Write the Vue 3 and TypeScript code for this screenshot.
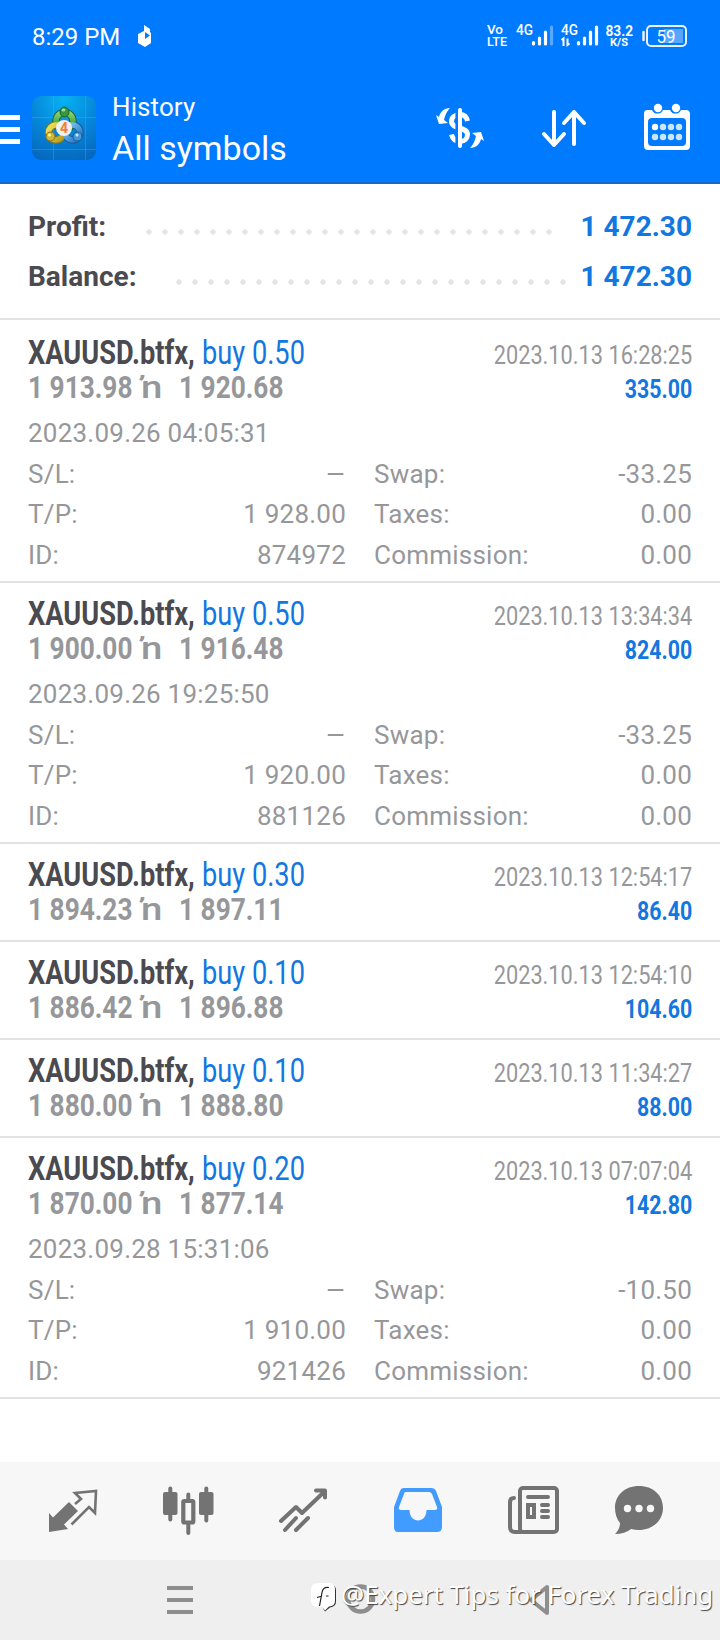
<script setup lang="ts">
interface Trade {
  volume: string
  open: string
  close: string
  closedAt: string
  profit: string
  openedAt?: string
  takeProfit?: string
  id?: string
  swap?: string
}

const summary = [
  { label: 'Profit:', value: '1 472.30', kind: 'profit' },
  { label: 'Balance:', value: '1 472.30', kind: 'balance' },
]

const trades: Trade[] = [
  { volume: 'buy 0.50', open: '1 913.98', close: '1 920.68', closedAt: '2023.10.13 16:28:25', profit: '335.00', openedAt: '2023.09.26 04:05:31', takeProfit: '1 928.00', id: '874972', swap: '-33.25' },
  { volume: 'buy 0.50', open: '1 900.00', close: '1 916.48', closedAt: '2023.10.13 13:34:34', profit: '824.00', openedAt: '2023.09.26 19:25:50', takeProfit: '1 920.00', id: '881126', swap: '-33.25' },
  { volume: 'buy 0.30', open: '1 894.23', close: '1 897.11', closedAt: '2023.10.13 12:54:17', profit: '86.40' },
  { volume: 'buy 0.10', open: '1 886.42', close: '1 896.88', closedAt: '2023.10.13 12:54:10', profit: '104.60' },
  { volume: 'buy 0.10', open: '1 880.00', close: '1 888.80', closedAt: '2023.10.13 11:34:27', profit: '88.00' },
  { volume: 'buy 0.20', open: '1 870.00', close: '1 877.14', closedAt: '2023.10.13 07:07:04', profit: '142.80', openedAt: '2023.09.28 15:31:06', takeProfit: '1 910.00', id: '921426', swap: '-10.50' },
]
</script>

<template>
  <div class="screen">
    <header class="top">
      <div class="status">
        <span class="clock">8:29 PM</span>
        <svg class="note" width="14" height="22" viewBox="0 0 14 22"><path fill="#fff" d="M6 0l6 4v4l1-1v11l-6 4-7-4V9l6-3z" /><path fill="#007aff" d="M7 7v7l5-3.500z" /></svg>
        <span class="grow"></span>
        <svg class="cells" width="202" height="26" viewBox="0 0 202 26">
          <g fill="#fff" font-family="Roboto" font-weight="500">
            <text x="0" y="11" font-size="13.5" textLength="16" lengthAdjust="spacingAndGlyphs">Vo</text>
            <text x="0" y="23" font-size="13.5" textLength="20" lengthAdjust="spacingAndGlyphs">LTE</text>
            <text x="29" y="12" font-size="14.5" textLength="17" lengthAdjust="spacingAndGlyphs">4G</text>
            <text x="74" y="12" font-size="14.5" textLength="17" lengthAdjust="spacingAndGlyphs">4G</text>
            <text x="118.500" y="13" font-size="15.5" font-weight="700" textLength="27.500" lengthAdjust="spacingAndGlyphs">83.2</text>
            <text x="123" y="23" font-size="11.5" font-weight="700" textLength="18" lengthAdjust="spacingAndGlyphs">K/S</text>
          </g>
          <g stroke="#fff" stroke-width="3.200" stroke-linecap="round">
            <path d="M46.500 21v-1.500M52.500 21v-6M58.500 21V9" />
            <path d="M64.500 21V4" opacity=".35" />
            <path d="M91.500 21v-1.500M97.500 21v-6M103.500 21V9M109.500 21V4" />
          </g>
          <path d="M74.500 17l2-1.500V23M80.500 15.500v6.500l2-1.500" fill="none" stroke="#fff" stroke-width="2" />
          <rect x="160" y="3" width="39" height="20" rx="4" fill="none" stroke="#e8f3ff" stroke-width="2" />
          <rect x="177" y="6" width="19" height="14" fill="#58a6ff" />
          <path d="M156.500 9v8" stroke="#e8f3ff" stroke-width="2.500" stroke-linecap="round" />
          <text x="169.500" y="19.500" font-family="Roboto" font-size="18" fill="#fff" textLength="19" lengthAdjust="spacingAndGlyphs">59</text>
        </svg>
      </div>
      <div class="bar">
        <svg class="burger" width="20" height="26" viewBox="0 0 20 26"><path fill="#fff" d="M0 0h20v5H0zM0 12h20v5H0zM0 24h20v5H0z" /></svg>
        <svg class="logo" width="64" height="64" viewBox="0 0 64 64">
          <defs>
            <radialGradient id="tile" cx=".5" cy=".05" r="1"><stop offset="0" stop-color="#08b2f3" /><stop offset=".55" stop-color="#0684d8" /><stop offset="1" stop-color="#0568bd" /></radialGradient>
            <linearGradient id="green" x2="0" y2="1"><stop stop-color="#8bd46d" /><stop offset="1" stop-color="#1f8a27" /></linearGradient>
            <linearGradient id="gold" x2="1" y2="1"><stop stop-color="#f0e45a" /><stop offset="1" stop-color="#b79a1b" /></linearGradient>
            <linearGradient id="sky" x2="1" y2="1"><stop stop-color="#8ccff5" /><stop offset="1" stop-color="#1a6fc0" /></linearGradient>
          </defs>
          <rect width="64" height="64" rx="9" fill="url(#tile)" />
          <path d="M0 21.500h64M0 53.500h64M21.500 0v64M53.500 0v64" stroke="#55bdf0" stroke-opacity=".3" />
          <g fill="none" stroke-width="5.500">
            <circle cx="32.500" cy="25" r="8.500" stroke="#205f3c" stroke-width="7.500" />
            <circle cx="24" cy="36.500" r="7.500" stroke="#7c7a24" stroke-width="7.500" />
            <circle cx="40.500" cy="36.500" r="7.500" stroke="#195c9c" stroke-width="7.500" />
            <circle cx="32.500" cy="25" r="8.500" stroke="url(#green)" />
            <circle cx="24" cy="36.500" r="7.500" stroke="url(#gold)" />
            <circle cx="40.500" cy="36.500" r="7.500" stroke="url(#sky)" />
          </g>
          <ellipse cx="32.500" cy="16" rx="4.500" ry="5" fill="#36973b" stroke="#1b6130" />
          <circle cx="18.500" cy="40.500" r="4.500" fill="#d2b62f" stroke="#847421" />
          <circle cx="45.500" cy="40.500" r="4.500" fill="#4597d7" stroke="#175ca0" />
          <ellipse cx="31.500" cy="14" rx="2" ry="1.500" fill="#a4dc9c" /><circle cx="17.500" cy="39" r="1.500" fill="#fff3a0" /><circle cx="45" cy="39" r="1.500" fill="#c6e9ff" />
          <circle cx="32" cy="32" r="8" fill="#f1f1ec" />
          <text x="32" y="37" text-anchor="middle" font-family="Roboto" font-weight="700" font-size="14" fill="#f27b38">4</text>
        </svg>
        <div class="heading">
          <span class="small">History</span>
          <span class="large">All symbols</span>
        </div>
        <svg class="actions" width="256" height="50" viewBox="0 0 256 50">
          <g fill="none" stroke="#fff">
            <path d="M32.500 17C31.500 12.500 28.500 10.500 25 10.500c-5 0-8.500 3-8.500 7 0 8 16 5 16 13 0 4-3 7-7.500 7-5 0-7.500-3-8.500-7" stroke-width="5" />
            <path d="M21.700 6v37" stroke="#007aff" stroke-width="2.600" /><path d="M25 6v36" stroke-width="4" stroke-linecap="round" />
            <g stroke-width="4" stroke-linecap="round" stroke-linejoin="round"><path d="M119 8v33M109 30l10 11 10-11M139 40V8M129 19l10-11 10 11" /></g>
          </g>
          <path fill="#fff" d="M15 4C9 4 5 8 4 13l-3-2 3 9 9-1-4-3c1-5 3-9 6-12zM35 44c6 0 10-4 11-9l3 2-3-9-9 1 4 3c-1 5-3 9-6 12z" />
          <path fill="#fff" d="M212 6h5a6 6 0 0 0 11 0h7a6 6 0 0 0 11 0h5q4 0 4 4v32q0 4-4 4h-38q-4 0-4-4V10q0-4 3-4z" />
          <circle cx="223" cy="4" r="4.200" fill="#fff" /><circle cx="241" cy="4" r="4.200" fill="#fff" />
          <rect x="213" y="14" width="38" height="28" rx="4" fill="#007aff" />
          <g fill="#c9e6ff"><circle cx="220" cy="23" r="3.200" fill="#fff" /><circle cx="228" cy="23" r="3.200" /><circle cx="236" cy="23" r="3.200" /><circle cx="244" cy="23" r="3.200" /><circle cx="220" cy="33" r="3.200" /><circle cx="228" cy="33" r="3.200" /><circle cx="236" cy="33" r="3.200" /><circle cx="244" cy="33" r="3.200" /></g>
        </svg>
      </div>
    </header>

    <section class="summary">
      <div v-for="s in summary" :key="s.label" class="sum-row" :class="s.kind">
        <span class="sum-label">{{ s.label }}</span>
        <span class="dots"></span>
        <span class="sum-value">{{ s.value }}</span>
      </div>
    </section>

    <main>
      <article v-for="(t, i) in trades" :key="i" class="trade">
        <div class="line">
          <span class="title"><b class="symbol">XAUUSD.btfx,</b><span class="volume">{{ t.volume }}</span></span>
          <span class="closed">{{ t.closedAt }}</span>
        </div>
        <div class="line">
          <span class="prices"><span class="price">{{ t.open }}</span><span class="mark">ŉ</span><span class="price">{{ t.close }}</span></span>
          <span class="amount">{{ t.profit }}</span>
        </div>
        <div v-if="t.openedAt" class="details">
          <div class="opened">{{ t.openedAt }}</div>
          <div class="grid">
            <div class="pair"><span>S/L:</span><span class="dash">–</span></div>
            <div class="pair"><span>Swap:</span><span>{{ t.swap }}</span></div>
            <div class="pair"><span>T/P:</span><span>{{ t.takeProfit }}</span></div>
            <div class="pair"><span>Taxes:</span><span>0.00</span></div>
            <div class="pair"><span>ID:</span><span>{{ t.id }}</span></div>
            <div class="pair"><span>Commission:</span><span>0.00</span></div>
          </div>
        </div>
      </article>
    </main>

    <footer>
      <nav class="tabs">
        <svg width="50" height="50" viewBox="0 0 50 50">
          <path fill="#737373" d="M1 46V27l4 4.500L21 16l9 9-14 13.500 4 4.500z" />
          <path fill="none" stroke="#737373" stroke-width="2.600" d="M27 18l6-5-6-6 21-2-1 22-6-6-17.500 17.500" />
        </svg>
        <svg width="52" height="50" viewBox="0 0 52 50">
          <g fill="#737373"><rect x="1" y="6" width="14.500" height="23" rx="2" /><rect x="37" y="6" width="14.500" height="23" rx="2" /></g>
          <path d="M8.300 2.500v31M44.300 2.500v32M26.300 8.500v6M26.300 38v9" stroke="#737373" stroke-width="4" stroke-linecap="round" />
          <rect x="21.300" y="15" width="10" height="21.500" rx="1" fill="none" stroke="#737373" stroke-width="4.200" />
        </svg>
        <svg width="50" height="50" viewBox="0 0 50 50">
          <path fill="none" stroke="#737373" stroke-width="4" stroke-linecap="round" stroke-linejoin="round" d="M3 35l15-14 6 6L46 6M38 4.500h9v7M7 44l11-12M18 44l12-12" />
        </svg>
        <svg width="50" height="50" viewBox="0 0 50 50">
          <path fill="#429bff" fill-rule="evenodd" d="M11 2h27q4 0 5 3l6 16v20q0 5-5 5H5q-4 0-4-5V21L7 5q1-3 4-3zm2 4q-2 0-2 2L6 21q-1 3 2 3h8.500c0 14 17 14 17 0h8.500q3 0 2-3L39 8q-1-2-3-2z" />
        </svg>
        <svg width="52" height="50" viewBox="0 0 52 50">
          <g fill="none" stroke="#737373" stroke-width="4" stroke-linecap="round"><rect x="13" y="2" width="37" height="44" rx="3" /><path d="M7 12q-4 0-4 4v25q0 5 5 5h6" /><path d="M21 11h20M35 19h6M35 25h6M35 31h6" /><rect x="21" y="19" width="6" height="12" /></g>
        </svg>
        <svg class="chat" width="50" height="50" viewBox="0 0 50 50">
          <path fill="#737373" d="M25 0c14 0 24 9 24 22S38 44 25 44q-4 0-8-1-6 5-16 5 5-5 5-11-5-6-5-15C1 9 11 0 25 0z" />
          <g fill="#f7f7f7"><circle cx="13.500" cy="22.500" r="3.700" /><circle cx="25" cy="22.500" r="3.700" /><circle cx="36.500" cy="22.500" r="3.700" /></g>
        </svg>
      </nav>
      <div class="system">
        <svg width="26" height="28" viewBox="0 0 26 28"><path fill="#8e8e8e" d="M0 0h26v4H0zM0 12h26v4H0zM0 24h26v4H0z" /></svg>
        <svg width="30" height="30" viewBox="0 0 30 30"><circle cx="13.500" cy="14" r="12.500" fill="none" stroke="#8e8e8e" stroke-width="4.500" /></svg>
        <svg width="24" height="32" viewBox="0 0 24 32"><path fill="none" stroke="#8e8e8e" stroke-width="4" stroke-linejoin="round" d="M17 3v26L1 16z" /></svg>
        <div class="credit">
          <svg width="26" height="29" viewBox="0 0 26 29"><path fill="#333" d="M8 1.500h11q6 0 6 6v11q0 5-6 6l-5 4-2-3z" /><path fill="#fff" d="M7 0h11q6 0 6 6v12q0 5-6 5.500l-4 4-3-3.500H7q-7 0-7-7V7q0-7 7-7z" /><path fill="none" stroke="#222" stroke-width="1.200" d="M18 4.500q-6-1-7 5L8.500 23M6 14.500l5-1.500M15 13h2.500" /></svg>
          <span class="handle">@Expert Tips for Forex Trading</span>
        </div>
      </div>
    </footer>
  </div>
</template>

<style>
body { margin: 0; background: #fff; }
</style>

<style scoped>
.screen { width: 720px; height: 1640px; display: flex; flex-direction: column; overflow: hidden; background: #fff; font-family: Roboto, "Liberation Sans", sans-serif; color: #96979a; }
svg { display: block; flex: none; overflow: visible; }
.top { height: 184px; box-sizing: border-box; background: #007aff; border-bottom: 2px solid #1668c8; color: #fff; }
.status { display: flex; height: 72px; align-items: center; padding: 0 31px 0 32px; box-sizing: border-box; }
.clock { font-size: 24px; line-height: 30px; padding-top: 2px; }
.note { margin-left: 18px; }
.grow { flex: 1; }
.bar { display: flex; align-items: center; height: 112px; }
.burger { margin-right: 12px; }
.heading { display: flex; flex-direction: column; margin-left: 16px; flex: 1; padding-top: 2px; }
.small { font-size: 26px; line-height: 37px; letter-spacing: .1px; }
.large { font-size: 34px; line-height: 44px; }
.actions { margin-right: 29px; margin-top: 2px; }
.summary { height: 134px; border-bottom: 2px solid #e2e2e2; }
.sum-row { display: flex; height: 50px; padding: 0 28px; align-items: center; justify-content: space-between; font-weight: 700; font-size: 28px; line-height: 50px; }
.summary .profit { padding-top: 18px; }
.sum-label { color: #4a4a50; }
.sum-value { color: #1277e0; margin-left: auto; }
.dots { height: 6px; background: radial-gradient(circle at 3px 3px, #e4e4e4 2.3px, transparent 3px) 0 0 / 16px 6px; margin-top: 9px; }
.profit .sum-label { width: 117.5px; }
.balance .sum-label { width: 147.5px; }
.profit .dots { width: 406px; }
.balance .dots { width: 390px; }
.trade { border-bottom: 2px solid #e2e2e2; padding: 14px 28px; }
.trade:first-child { padding-top: 16px; }
.line { display: flex; justify-content: space-between; align-items: baseline; height: 34px; line-height: 34px; white-space: nowrap; }
.title, .prices { display: flex; align-items: baseline; font-size: 32px; }
.title { font-size: 32.5px; }
.symbol, .volume, .price, .closed, .amount { display: inline-block; transform-origin: left; }
.closed, .amount { transform-origin: right; font-size: 26px; }
.closed { transform: scaleX(.837); }
.amount { color: #1277e0; font-weight: 700; transform: scaleX(.82); }
.symbol { color: #4a4a50; font-weight: 700; width: 174px; transform: scaleX(.837); }
.volume { color: #1277e0; width: 102px; transform: scaleX(.837); }
.price { font-weight: 700; width: 111px; transform: scaleX(.82); }
.mark { width: 40px; font-weight: 500; transform: translateX(2px) scaleX(1.2); transform-origin: left; }
.details { font-size: 26px; letter-spacing: .23px; padding-top: 9px; margin-bottom: -8.5px; }
.opened { height: 41px; line-height: 41px; }
.grid { display: grid; grid-template-columns: 318px 318px; column-gap: 28px; grid-template-rows: 40px 41px 40.5px; line-height: 40px; }
.pair { display: flex; justify-content: space-between; }
.dash { display: inline-block; transform: scaleX(1.22); transform-origin: right; }
footer { margin-top: auto; }
.tabs { height: 98px; background: #f7f7f7; display: flex; gap: 64.2px; align-items: center; padding: 0 48px; }
.chat { margin-left: -9px; }
.system { height: 80px; background: #efefef; position: relative; display: flex; align-items: center; padding: 0 166px 0 167px; justify-content: space-between; }
.credit { position: absolute; left: 311px; top: 17px; display: flex; align-items: flex-start; white-space: nowrap; }
.credit svg { margin-top: 6px; }
.handle { font-family: "Noto Sans", sans-serif; font-size: 25.85px; line-height: 32px; padding-top: 1px; color: #fff; text-shadow: 1px 1px 1px #444; margin-left: 4px; }
</style>
